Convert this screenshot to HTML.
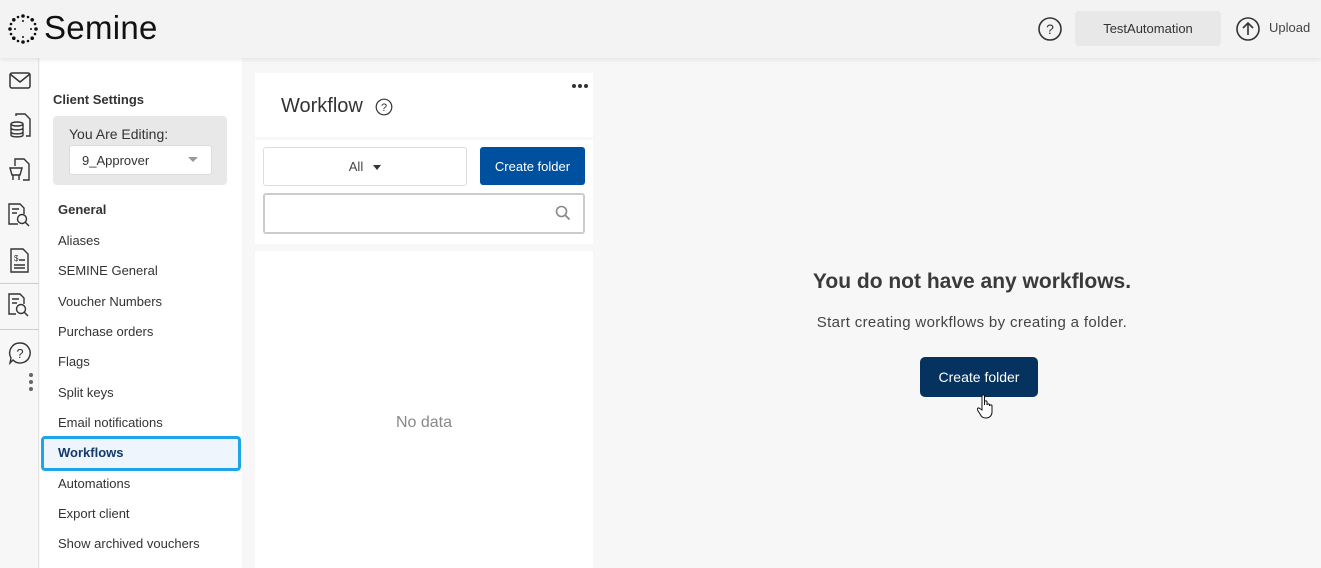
<!DOCTYPE html>
<html><head><meta charset="utf-8"><style>
*{box-sizing:border-box;margin:0;padding:0}
body{width:1321px;height:568px;overflow:hidden;background:#f7f7f7;font-family:"Liberation Sans",sans-serif;color:#333;position:relative}
.hdr{position:absolute;left:0;top:0;width:1321px;height:58px;background:#f3f3f3;box-shadow:0 2px 4px rgba(0,0,0,.08);z-index:2}
.logo{position:absolute;left:44px;top:9px;font-size:33px;color:#111;letter-spacing:.3px}
.ab{position:absolute}
.rail{position:absolute;left:0;top:58px;width:39px;height:510px;background:#f7f7f7;border-right:1px solid #e4e4e4}
.side{position:absolute;left:40px;top:58px;width:202px;height:510px;background:#fff}
.side .it{position:absolute;left:18px;font-size:13px;color:#333}
.mid{position:absolute;left:255px;background:#fff}
.btn{background:#0050a0;color:#fff;font-size:13px;border-radius:3px;display:flex;align-items:center;justify-content:center}
</style></head><body>
<div class="hdr">
<svg class="ab" style="left:7px;top:13px" width="32" height="32" viewBox="0 0 32 32">
<g fill="#111">
<circle cx="16" cy="3" r="1.8"/><circle cx="16" cy="29" r="1.8"/><circle cx="3" cy="16" r="1.8"/><circle cx="29" cy="16" r="1.8"/>
<circle cx="25.2" cy="6.8" r="1.8"/><circle cx="6.8" cy="6.8" r="1.8"/><circle cx="25.2" cy="25.2" r="1.8"/><circle cx="6.8" cy="25.2" r="1.8"/>
<circle cx="21" cy="4" r="1.3"/><circle cx="11" cy="4" r="1.3"/><circle cx="21" cy="28" r="1.3"/><circle cx="11" cy="28" r="1.3"/>
<circle cx="4" cy="11" r="1.3"/><circle cx="4" cy="21" r="1.3"/><circle cx="28" cy="11" r="1.3"/><circle cx="28" cy="21" r="1.3"/>
<circle cx="16" cy="8" r="1"/><circle cx="16" cy="24" r="1"/><circle cx="8" cy="16" r="1"/><circle cx="24" cy="16" r="1"/>
</g></svg>
<div class="logo">Semine</div>
<svg class="ab" style="left:1037px;top:16px" width="26" height="26" viewBox="0 0 26 26"><circle cx="13" cy="13" r="11" fill="none" stroke="#333" stroke-width="1.6"/><text x="13" y="18" font-size="14" text-anchor="middle" fill="#333" font-family="Liberation Sans">?</text></svg>
<div class="ab" style="left:1075px;top:11px;width:146px;height:35px;background:#e8e8e8;border-radius:4px;font-size:13px;display:flex;align-items:center;justify-content:center;color:#333">TestAutomation</div>
<svg class="ab" style="left:1235px;top:16px" width="26" height="26" viewBox="0 0 26 26"><circle cx="13" cy="13" r="11" fill="none" stroke="#333" stroke-width="1.6"/><path d="M13 19V7M8 12l5-5 5 5" fill="none" stroke="#333" stroke-width="1.6"/></svg>
<div class="ab" style="left:1269px;top:20px;font-size:13px;color:#444">Upload</div>
</div>
<div class="rail">
<svg class="ab" style="left:9px;top:14px" width="22" height="18" viewBox="0 0 22 18"><rect x="1" y="1" width="20" height="15" rx="2" fill="none" stroke="#333" stroke-width="1.5"/><path d="M1 2l10 8 10-8" fill="none" stroke="#333" stroke-width="1.5"/></svg>
<svg class="ab" style="left:9px;top:55px" width="22" height="26" viewBox="0 0 22 26" fill="none" stroke="#333" stroke-width="1.4"><path d="M7 3V1h9l5 5v17h-4"/><ellipse cx="8" cy="11" rx="6" ry="2"/><path d="M2 11v11c0 2.5 12 2.5 12 0V11M2 15c0 2.5 12 2.5 12 0M2 19c0 2.5 12 2.5 12 0"/></svg>
<svg class="ab" style="left:9px;top:100px" width="22" height="26" viewBox="0 0 22 26" fill="none" stroke="#333" stroke-width="1.4"><path d="M6 8V1h9l5 5v16h-6"/><path d="M1 10h12l-2 7H3z M4 17v5M10 17v5"/></svg>
<svg class="ab" style="left:7px;top:144px" width="24" height="26" viewBox="0 0 24 26" fill="none" stroke="#333" stroke-width="1.4"><path d="M11 22H2V2h11l4 4v6"/><path d="M5 7h7M5 11h5"/><circle cx="15" cy="17" r="4.5"/><path d="M18 20l4 4"/></svg>
<svg class="ab" style="left:9px;top:190px" width="22" height="26" viewBox="0 0 22 26" fill="none" stroke="#333" stroke-width="1.4"><path d="M2 1h12l5 5v18H2z"/><text x="5" y="13" font-size="8" fill="#333" stroke="none">$</text><path d="M10 12h6M5 17h11M5 20h11"/></svg>
<div class="ab" style="left:0;top:225px;width:39px;border-top:1px solid #ccc"></div>
<svg class="ab" style="left:7px;top:234px" width="24" height="26" viewBox="0 0 24 26" fill="none" stroke="#333" stroke-width="1.4"><path d="M9 22H2V2h11l4 4v6"/><path d="M5 7h7M5 11h5"/><circle cx="14" cy="17" r="4.5"/><path d="M17 20l4 4"/></svg>
<div class="ab" style="left:0;top:271px;width:39px;border-top:1px solid #ccc"></div>
<svg class="ab" style="left:8px;top:283px" width="24" height="24" viewBox="0 0 24 24"><path d="M12 2a10 10 0 1 1-7 17l-3 3 1-5A10 10 0 0 1 12 2z" fill="none" stroke="#333" stroke-width="1.4"/><text x="12" y="17" font-size="13" text-anchor="middle" fill="#333">?</text></svg>
<div class="ab" style="left:29px;top:315px;width:4px;height:4px;border-radius:2px;background:#666;box-shadow:0 7px 0 #666,0 14px 0 #666"></div>
</div>
<div class="side">
<div class="it" style="left:13px;top:34px;font-weight:bold;font-size:13px">Client Settings</div>
<div class="ab" style="left:13px;top:58px;width:174px;height:69px;background:#e8e8e8;border-radius:4px"></div>
<div class="it" style="left:29px;top:68px;font-size:14px">You Are Editing:</div>
<div class="ab" style="left:29px;top:87px;width:143px;height:30px;background:#fff;border:1px solid #ddd;border-radius:3px;font-size:13px;padding:7px 12px">9_Approver</div>
<div class="ab" style="left:148px;top:99px;border:5px solid transparent;border-top:5px solid #999;border-bottom:0"></div>
<div class="it" style="top:144px;font-weight:bold">General</div>
<div class="it" style="top:175px">Aliases</div>
<div class="it" style="top:205px">SEMINE General</div>
<div class="it" style="top:236px">Voucher Numbers</div>
<div class="it" style="top:266px">Purchase orders</div>
<div class="it" style="top:296px">Flags</div>
<div class="it" style="top:327px">Split keys</div>
<div class="it" style="top:357px">Email notifications</div>
<div class="ab" style="left:1px;top:378px;width:200px;height:35px;background:#eef5fc;border:3px solid #1ea4e9;border-radius:4px"></div>
<div class="it" style="top:387px;font-weight:bold;color:#123a6b">Workflows</div>
<div class="it" style="top:418px">Automations</div>
<div class="it" style="top:448px">Export client</div>
<div class="it" style="top:478px">Show archived vouchers</div>
</div>
<div class="mid" style="top:73px;width:338px;height:64px">
<div class="ab" style="left:26px;top:22px;font-size:20px;color:#333">Workflow</div>
<svg class="ab" style="left:120px;top:25px" width="18" height="18" viewBox="0 0 18 18"><circle cx="9" cy="9" r="7.8" fill="none" stroke="#333" stroke-width="1.2"/><text x="9" y="13" font-size="11" text-anchor="middle" fill="#333">?</text></svg>
<div class="ab" style="left:317px;top:11px;width:4px;height:4px;border-radius:2px;background:#333;box-shadow:6px 0 0 #333,12px 0 0 #333"></div>
</div>
<div class="mid" style="top:140px;width:338px;height:104px">
<div class="ab" style="left:8px;top:7px;width:204px;height:39px;border:1px solid #ddd;border-radius:3px;font-size:13px;display:flex;align-items:center;justify-content:center;color:#444">All <span style="display:inline-block;margin-left:10px;border:4px solid transparent;border-top:5px solid #333;border-bottom:0;margin-top:2px"></span></div>
<div class="ab btn" style="left:225px;top:7px;width:105px;height:38px">Create folder</div>
<div class="ab" style="left:8px;top:53px;width:322px;height:41px;border:2px solid #ccc;border-radius:3px"></div>
<svg class="ab" style="left:300px;top:65px" width="16" height="16" viewBox="0 0 16 16"><circle cx="6.5" cy="6.5" r="5" fill="none" stroke="#888" stroke-width="1.6"/><path d="M10 10l4.5 4.5" stroke="#888" stroke-width="1.8"/></svg>
</div>
<div class="mid" style="top:251px;width:338px;height:317px">
<div class="ab" style="left:0;width:338px;top:163px;text-align:center;font-size:16px;color:#888">No data</div>
</div>
<div class="ab" style="left:593px;top:270px;width:758px;text-align:center;font-size:21px;font-weight:bold;color:#3a3a3a">You do not have any workflows.</div>
<div class="ab" style="left:593px;top:314px;width:758px;text-align:center;font-size:15px;letter-spacing:.35px;color:#444">Start creating workflows by creating a folder.</div>
<div class="ab btn" style="left:920px;top:357px;width:118px;height:40px;background:#06325f;border-radius:5px;font-size:14px">Create folder</div>
<svg class="ab" style="left:977px;top:394px" width="18" height="26" viewBox="0 0 18 26"><path d="M5 2c0-1.5 2.5-1.5 2.5 0v9l0-3c0-1.5 2.5-1.5 2.5 0v3c0-1.5 2.5-1.5 2.5 0v1c0-1.5 2.5-1.5 2.5 0v6c0 3-2 6-6 6-3 0-4.5-1-6-4l-2.5-4c-.8-1.5 1-2.8 2.2-1.5L5 16z" fill="#fff" stroke="#111" stroke-width="1"/></svg>
</body></html>
